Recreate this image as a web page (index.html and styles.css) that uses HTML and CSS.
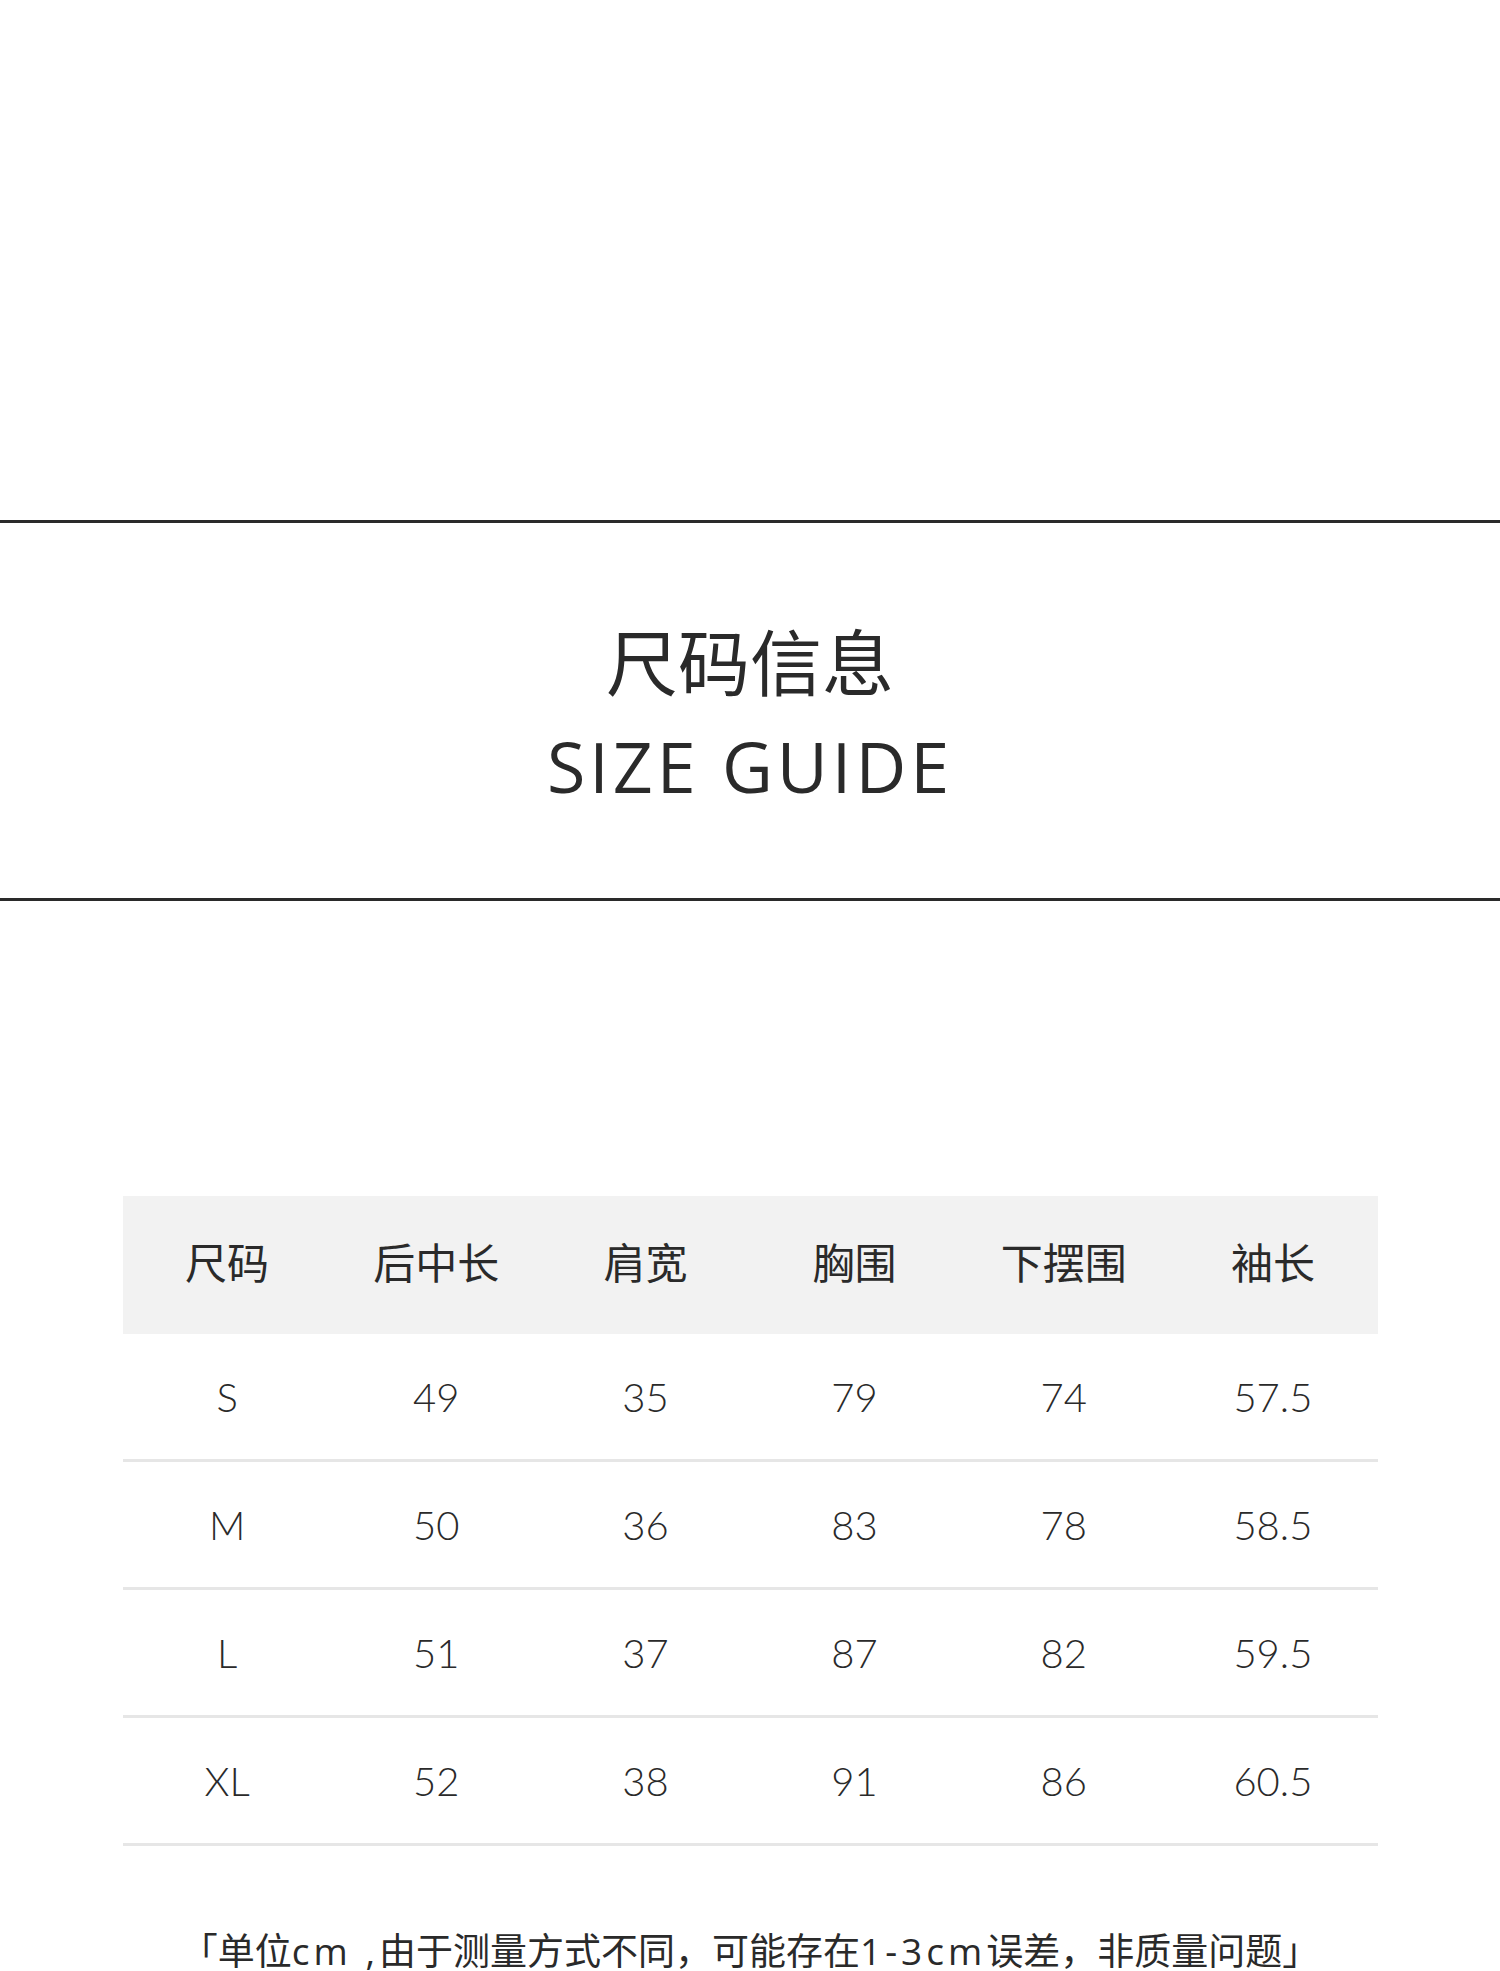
FILE: index.html
```html
<!DOCTYPE html>
<html lang="zh-CN">
<head>
<meta charset="utf-8">
<title>尺码信息 SIZE GUIDE</title>
<link rel="stylesheet" href="styles.css">
</head>
<body>
<div class="page">
  <div class="top-space"></div>
  <section class="title-band">
    <h1 class="title-cn">尺码信息</h1>
    <h2 class="title-en">SIZE GUIDE</h2>
  </section>
  <table class="size-table">
    <thead>
      <tr><th>尺码</th><th>后中长</th><th>肩宽</th><th>胸围</th><th>下摆围</th><th>袖长</th></tr>
    </thead>
    <tbody>
      <tr><td>S</td><td>49</td><td>35</td><td>79</td><td>74</td><td>57.5</td></tr>
      <tr><td>M</td><td>50</td><td>36</td><td>83</td><td>78</td><td>58.5</td></tr>
      <tr><td>L</td><td>51</td><td>37</td><td>87</td><td>82</td><td>59.5</td></tr>
      <tr><td>XL</td><td>52</td><td>38</td><td>91</td><td>86</td><td>60.5</td></tr>
    </tbody>
  </table>
  <p class="note">「单位<span class="latin">cm ,</span>由于测量方式不同，可能存在<span class="latin">1-3cm</span>误差，非质量问题」</p>
</div>
</body>
</html>
```
FILE: styles.css
```css
html, body {
  margin: 0;
  padding: 0;
  background: #ffffff;
}
body {
  font-family: "Noto Sans CJK SC", "Noto Sans", sans-serif;
  color: #2a2a2a;
}
.page {
  width: 1500px;
  height: 1971px;
  overflow: hidden;
}
.top-space {
  height: 520px;
}
.title-band {
  border-top: 3px solid #2a2a2a;
  border-bottom: 3px solid #2a2a2a;
  padding: 96px 0 92px;
  text-align: center;
}
.title-cn {
  margin: 0;
  font-size: 72px;
  line-height: 80px;
  font-weight: 400;
}
.title-en {
  margin: 27px 0 0;
  font-family: "Open Sans", sans-serif;
  font-size: 70px;
  line-height: 80px;
  font-weight: 400;
  letter-spacing: 4px;
}
.size-table {
  width: 1255px;
  margin: 295px auto 0;
  border-collapse: collapse;
  table-layout: fixed;
}
.size-table th {
  background: #f2f2f2;
  height: 128px;
  padding: 0 0 10px;
  font-size: 42px;
  font-weight: 400;
  text-align: center;
  vertical-align: middle;
}
.size-table td {
  height: 125px;
  padding: 0;
  border-bottom: 3px solid #e6e6e6;
  font-family: "Lato", sans-serif;
  font-size: 40px;
  font-weight: 300;
  text-align: center;
  vertical-align: middle;
}
.note {
  margin: 78px 0 0;
  text-align: center;
  font-size: 37px;
  line-height: 50px;
}
.note .latin {
  font-family: "Open Sans", sans-serif;
  letter-spacing: 4px;
}
```
